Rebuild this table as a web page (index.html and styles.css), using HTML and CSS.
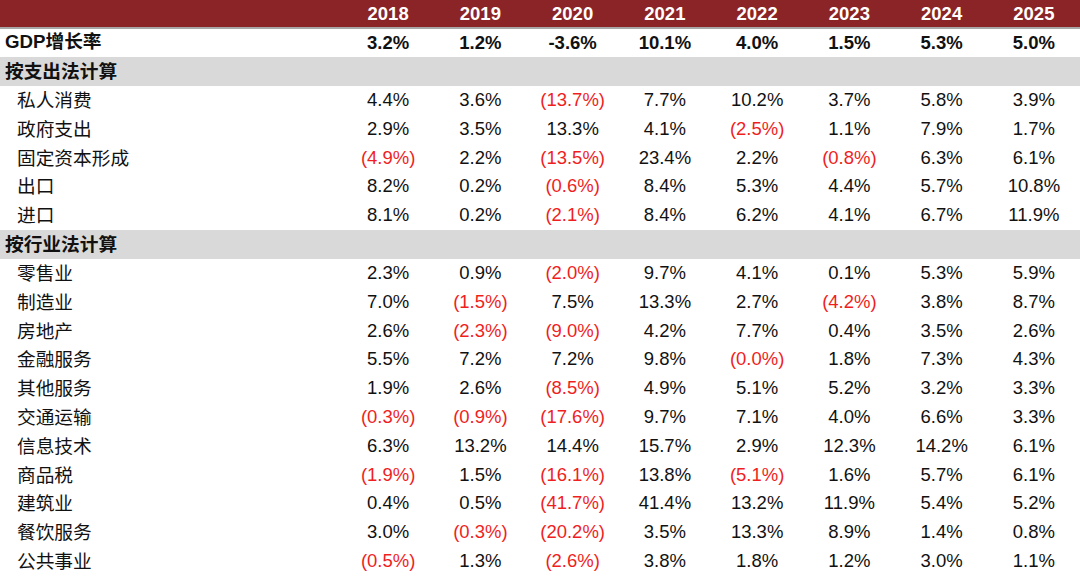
FILE: index.html
```html
<!DOCTYPE html>
<html lang="zh">
<head>
<meta charset="utf-8">
<title>GDP增长率</title>
<link rel="stylesheet" href="styles.css">
</head>
<body>
<div class="table">
  <div class="row head"><div class="label"></div><div>2018</div><div>2019</div><div>2020</div><div>2021</div><div>2022</div><div>2023</div><div>2024</div><div>2025</div></div>
  <div class="row gdp"><div class="label">GDP增长率</div><div>3.2%</div><div>1.2%</div><div>-3.6%</div><div>10.1%</div><div>4.0%</div><div>1.5%</div><div>5.3%</div><div>5.0%</div></div>
  <div class="row section"><div class="label">按支出法计算</div></div>
  <div class="row"><div class="label sub">私人消费</div><div>4.4%</div><div>3.6%</div><div class="neg">(13.7%)</div><div>7.7%</div><div>10.2%</div><div>3.7%</div><div>5.8%</div><div>3.9%</div></div>
  <div class="row"><div class="label sub">政府支出</div><div>2.9%</div><div>3.5%</div><div>13.3%</div><div>4.1%</div><div class="neg">(2.5%)</div><div>1.1%</div><div>7.9%</div><div>1.7%</div></div>
  <div class="row"><div class="label sub">固定资本形成</div><div class="neg">(4.9%)</div><div>2.2%</div><div class="neg">(13.5%)</div><div>23.4%</div><div>2.2%</div><div class="neg">(0.8%)</div><div>6.3%</div><div>6.1%</div></div>
  <div class="row"><div class="label sub">出口</div><div>8.2%</div><div>0.2%</div><div class="neg">(0.6%)</div><div>8.4%</div><div>5.3%</div><div>4.4%</div><div>5.7%</div><div>10.8%</div></div>
  <div class="row"><div class="label sub">进口</div><div>8.1%</div><div>0.2%</div><div class="neg">(2.1%)</div><div>8.4%</div><div>6.2%</div><div>4.1%</div><div>6.7%</div><div>11.9%</div></div>
  <div class="row section"><div class="label">按行业法计算</div></div>
  <div class="row"><div class="label sub">零售业</div><div>2.3%</div><div>0.9%</div><div class="neg">(2.0%)</div><div>9.7%</div><div>4.1%</div><div>0.1%</div><div>5.3%</div><div>5.9%</div></div>
  <div class="row"><div class="label sub">制造业</div><div>7.0%</div><div class="neg">(1.5%)</div><div>7.5%</div><div>13.3%</div><div>2.7%</div><div class="neg">(4.2%)</div><div>3.8%</div><div>8.7%</div></div>
  <div class="row"><div class="label sub">房地产</div><div>2.6%</div><div class="neg">(2.3%)</div><div class="neg">(9.0%)</div><div>4.2%</div><div>7.7%</div><div>0.4%</div><div>3.5%</div><div>2.6%</div></div>
  <div class="row"><div class="label sub">金融服务</div><div>5.5%</div><div>7.2%</div><div>7.2%</div><div>9.8%</div><div class="neg">(0.0%)</div><div>1.8%</div><div>7.3%</div><div>4.3%</div></div>
  <div class="row"><div class="label sub">其他服务</div><div>1.9%</div><div>2.6%</div><div class="neg">(8.5%)</div><div>4.9%</div><div>5.1%</div><div>5.2%</div><div>3.2%</div><div>3.3%</div></div>
  <div class="row"><div class="label sub">交通运输</div><div class="neg">(0.3%)</div><div class="neg">(0.9%)</div><div class="neg">(17.6%)</div><div>9.7%</div><div>7.1%</div><div>4.0%</div><div>6.6%</div><div>3.3%</div></div>
  <div class="row"><div class="label sub">信息技术</div><div>6.3%</div><div>13.2%</div><div>14.4%</div><div>15.7%</div><div>2.9%</div><div>12.3%</div><div>14.2%</div><div>6.1%</div></div>
  <div class="row"><div class="label sub">商品税</div><div class="neg">(1.9%)</div><div>1.5%</div><div class="neg">(16.1%)</div><div>13.8%</div><div class="neg">(5.1%)</div><div>1.6%</div><div>5.7%</div><div>6.1%</div></div>
  <div class="row"><div class="label sub">建筑业</div><div>0.4%</div><div>0.5%</div><div class="neg">(41.7%)</div><div>41.4%</div><div>13.2%</div><div>11.9%</div><div>5.4%</div><div>5.2%</div></div>
  <div class="row"><div class="label sub">餐饮服务</div><div>3.0%</div><div class="neg">(0.3%)</div><div class="neg">(20.2%)</div><div>3.5%</div><div>13.3%</div><div>8.9%</div><div>1.4%</div><div>0.8%</div></div>
  <div class="row"><div class="label sub">公共事业</div><div class="neg">(0.5%)</div><div>1.3%</div><div class="neg">(2.6%)</div><div>3.8%</div><div>1.8%</div><div>1.2%</div><div>3.0%</div><div>1.1%</div></div>
</div>
</body>
</html>
```

FILE: styles.css
```css
html, body {
  margin: 0;
  padding: 0;
  background: #ffffff;
}
body {
  width: 1080px;
  height: 576px;
  overflow: hidden;
  font-family: "Liberation Sans", Arial, "Noto Sans CJK SC", sans-serif;
  font-size: 18.5px;
  color: #111111;
}
.table {
  display: flex;
  flex-direction: column;
}
.row {
  display: grid;
  grid-template-columns: 342px repeat(8, 1fr);
  height: 28.8px;
  align-items: center;
  text-align: center;
  white-space: nowrap;
}
.row > div {
  line-height: 28.8px;
}
.row > .label {
  text-align: left;
  font-family: "Noto Sans CJK SC", "Liberation Sans", sans-serif;
  font-size: 18.7px;
  padding-left: 5px;
  line-height: 25.8px;
  padding-bottom: 3px;
}
.row > .label.sub {
  padding-left: 17px;
}
.head {
  height: 27px;
  background: #8b2426;
  color: #ffffff;
  font-weight: bold;
  border-bottom: 2px solid #a8a8a8;
}
.head > div {
  line-height: 27px;
}
.gdp {
  height: 28px;
  font-weight: bold;
}
.gdp > div { line-height: 28px; }
.gdp > .label {
  font-family: "Liberation Sans", "Noto Sans CJK SC", sans-serif;
  font-weight: bold;
}
.section {
  height: 29px;
  background: #d9d9d9;
}
.section > .label {
  font-weight: bold;
}
.neg {
  color: #f01e1e;
}
```
